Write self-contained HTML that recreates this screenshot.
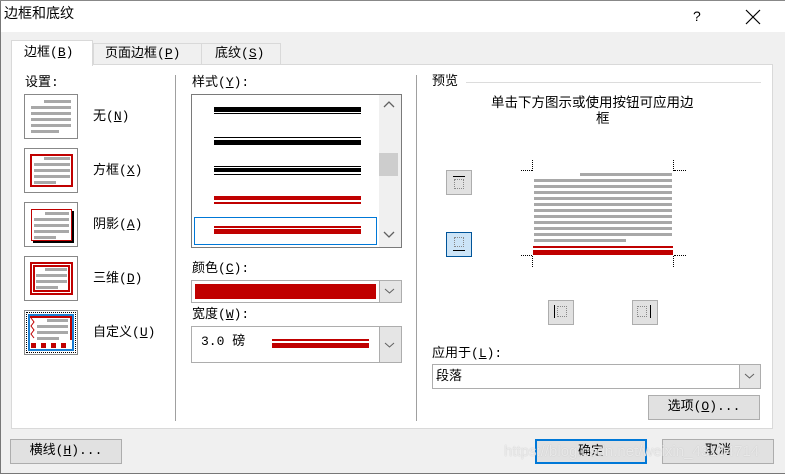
<!DOCTYPE html>
<html><head><meta charset="utf-8"><style>
*{box-sizing:border-box;margin:0;padding:0}
body{width:785px;height:474px;overflow:hidden;background:#f0f0f0;font-family:"Liberation Mono","Noto Sans CJK SC",monospace;font-size:13px;color:#000;position:relative}
.a{position:absolute}
.t{position:absolute;white-space:nowrap;line-height:16px}
.btn{position:absolute;background:#e1e1e1;border:1px solid #adadad;text-align:center;line-height:22px}
.g{position:absolute;background:#a8a8a8;height:3px}
.sb{position:absolute;border:1px solid #848484;background:#fff}
.ib{position:absolute;width:26px;height:25px;background:#e1e1e1;border:1px solid #adadad}
</style></head><body>
<div class="a" style="left:0;top:0;width:785px;height:32px;background:#fff"></div>
<div class="a" style="left:0;top:0;width:1px;height:474px;background:#777"></div>
<div class="a" style="left:0;top:0;width:785px;height:1px;background:#888"></div>
<div class="a" style="left:0;top:473px;width:785px;height:1px;background:#777"></div>
<div class="t" style="left:4px;top:7px;font-size:14px">边框和底纹</div>
<div class="t" style="left:693px;top:8px;font-size:14px;font-family:'Liberation Sans',sans-serif">?</div>
<svg class="a" style="left:745px;top:9px" width="16" height="16"><path d="M1 1L15 15M15 1L1 15" stroke="#000" stroke-width="1.2"/></svg>

<div class="a" style="left:93px;top:43px;width:109px;height:22px;background:#f0f0f0;border:1px solid #d9d9d9"></div>
<div class="a" style="left:201px;top:43px;width:80px;height:22px;background:#f0f0f0;border:1px solid #d9d9d9"></div>
<div class="a" style="left:11px;top:64px;width:762px;height:365px;background:#fff;border:1px solid #d9d9d9"></div>
<div class="a" style="left:11px;top:40px;width:82px;height:26px;background:#fff;border:1px solid #d9d9d9;border-bottom:none"></div>
<div class="t" style="left:24px;top:45px">边框(<u>B</u>)</div>
<div class="t" style="left:105px;top:46px">页面边框(<u>P</u>)</div>
<div class="t" style="left:215px;top:46px">底纹(<u>S</u>)</div>

<div class="t" style="left:25px;top:75px">设置:</div>
<div class="a" style="left:175px;top:75px;width:1px;height:346px;background:#a0a0a0"></div>
<div class="sb" style="left:24px;top:94px;width:54px;height:45px;border-color:#888"></div>
<div class="g" style="left:44px;top:100px;width:27px"></div>
<div class="g" style="left:31px;top:106px;width:40px"></div><div class="g" style="left:31px;top:112px;width:40px"></div><div class="g" style="left:31px;top:118px;width:40px"></div><div class="g" style="left:31px;top:124px;width:40px"></div><div class="g" style="left:31px;top:130px;width:28px"></div>
<div class="t" style="left:93px;top:109px">无(<u>N</u>)</div>

<div class="sb" style="left:24px;top:148px;width:54px;height:45px;border-color:#888"></div>
<div class="a" style="left:30px;top:154px;width:43px;height:33px;border:2px solid #c00000"></div>
<div class="g" style="left:44px;top:157px;width:26px"></div><div class="g" style="left:34px;top:163px;width:36px"></div><div class="g" style="left:34px;top:169px;width:36px"></div><div class="g" style="left:34px;top:175px;width:36px"></div><div class="g" style="left:34px;top:181px;width:22px"></div>
<div class="t" style="left:93px;top:163px">方框(<u>X</u>)</div>

<div class="sb" style="left:24px;top:202px;width:54px;height:45px;border-color:#888"></div>
<div class="a" style="left:31px;top:209px;width:41px;height:32px;border:1px solid #c00000;box-shadow:2px 2px 0 #000"></div>
<div class="g" style="left:45px;top:212px;width:24px"></div><div class="g" style="left:34px;top:218px;width:35px"></div><div class="g" style="left:34px;top:224px;width:35px"></div><div class="g" style="left:34px;top:230px;width:35px"></div><div class="g" style="left:34px;top:236px;width:22px"></div>
<div class="t" style="left:93px;top:217px">阴影(<u>A</u>)</div>

<div class="sb" style="left:24px;top:256px;width:54px;height:45px;border-color:#888"></div>
<div class="a" style="left:30px;top:262px;width:43px;height:33px;border:2px solid #c00000"></div>
<div class="a" style="left:33px;top:265px;width:37px;height:27px;border:2px solid #c00000"></div>
<div class="g" style="left:45px;top:268px;width:22px"></div><div class="g" style="left:36px;top:274px;width:31px"></div><div class="g" style="left:36px;top:280px;width:31px"></div><div class="g" style="left:36px;top:286px;width:22px"></div>
<div class="t" style="left:93px;top:271px">三维(<u>D</u>)</div>

<div class="sb" style="left:24px;top:310px;width:54px;height:45px;border-color:#888"></div>
<div class="a" style="left:26px;top:312px;width:50px;height:41px;border:1px dotted #000"></div>
<div class="a" style="left:28px;top:314px;width:46px;height:37px;border:2px solid #1a7fd4"></div>
<div class="a" style="left:30px;top:316px;width:41px;height:2px;background:#c00000"></div>
<div class="a" style="left:70px;top:316px;width:2px;height:24px;background:#c00000"></div>
<svg class="a" style="left:30px;top:318px" width="6" height="22"><path d="M1 0L4 4L1 8L4 12L1 16L4 20" stroke="#c00000" fill="none"/></svg>
<div class="g" style="left:47px;top:319px;width:21px"></div><div class="g" style="left:37px;top:325px;width:31px"></div><div class="g" style="left:37px;top:331px;width:31px"></div><div class="g" style="left:37px;top:337px;width:22px"></div>
<div class="a" style="left:31px;top:343px;width:5px;height:5px;background:#c00000"></div><div class="a" style="left:41px;top:343px;width:5px;height:5px;background:#c00000"></div><div class="a" style="left:51px;top:343px;width:5px;height:5px;background:#c00000"></div><div class="a" style="left:61px;top:343px;width:5px;height:5px;background:#c00000"></div>
<div class="t" style="left:93px;top:325px">自定义(<u>U</u>)</div>

<div class="t" style="left:192px;top:75px">样式(<u>Y</u>):</div>
<div class="sb" style="left:191px;top:94px;width:211px;height:154px;border-color:#7a7a7a"></div>
<div class="a" style="left:379px;top:95px;width:22px;height:152px;background:#f0f0f0"></div>
<div class="a" style="left:379px;top:153px;width:19px;height:23px;background:#cdcdcd"></div>
<svg class="a" style="left:383px;top:100px" width="12" height="10"><path d="M1 7L6 2L11 7" stroke="#606060" fill="none" stroke-width="1.3"/></svg>
<svg class="a" style="left:383px;top:230px" width="12" height="10"><path d="M1 2L6 7L11 2" stroke="#606060" fill="none" stroke-width="1.3"/></svg>
<div class="a" style="left:214px;top:107px;width:147px;height:5px;background:#000"></div><div class="a" style="left:214px;top:113px;width:147px;height:1px;background:#000"></div>
<div class="a" style="left:214px;top:137px;width:147px;height:1px;background:#000"></div><div class="a" style="left:214px;top:140px;width:147px;height:5px;background:#000"></div>
<div class="a" style="left:214px;top:166px;width:147px;height:1px;background:#000"></div><div class="a" style="left:214px;top:168px;width:147px;height:4px;background:#000"></div><div class="a" style="left:214px;top:174px;width:147px;height:1px;background:#000"></div>
<div class="a" style="left:214px;top:196px;width:147px;height:4px;background:#c00000"></div><div class="a" style="left:214px;top:202px;width:147px;height:2px;background:#c00000"></div>
<div class="a" style="left:194px;top:217px;width:183px;height:28px;border:1px solid #0078d7"></div>
<div class="a" style="left:214px;top:226px;width:147px;height:2px;background:#c00000"></div><div class="a" style="left:214px;top:229px;width:147px;height:5px;background:#c00000"></div>

<div class="t" style="left:192px;top:261px">颜色(<u>C</u>):</div>
<div class="a" style="left:191px;top:280px;width:211px;height:23px;background:#fff;border:1px solid #adadad"></div>
<div class="a" style="left:195px;top:284px;width:181px;height:15px;background:#c00000"></div>
<div class="a" style="left:379px;top:281px;width:22px;height:21px;background:#e5e5e5;border-left:1px solid #adadad"></div>
<svg class="a" style="left:384px;top:287px" width="11" height="8"><path d="M1 2L5.5 6L10 2" stroke="#606060" fill="none"/></svg>
<div class="t" style="left:192px;top:307px">宽度(<u>W</u>):</div>
<div class="a" style="left:191px;top:326px;width:211px;height:37px;background:#fff;border:1px solid #adadad"></div>
<div class="t" style="left:201px;top:334px">3.0 磅</div>
<div class="a" style="left:272px;top:339px;width:97px;height:2px;background:#c00000"></div><div class="a" style="left:272px;top:343px;width:97px;height:5px;background:#c00000"></div>
<div class="a" style="left:379px;top:327px;width:22px;height:35px;background:#e5e5e5;border-left:1px solid #adadad"></div>
<svg class="a" style="left:384px;top:341px" width="11" height="8"><path d="M1 2L5.5 6L10 2" stroke="#606060" fill="none"/></svg>

<div class="a" style="left:416px;top:75px;width:1px;height:346px;background:#a0a0a0"></div>
<div class="t" style="left:432px;top:74px">预览</div>
<div class="a" style="left:466px;top:82px;width:295px;height:1px;background:#dcdcdc"></div>
<div class="t" style="left:491px;top:97px;font-size:13.5px">单击下方图示或使用按钮可应用边</div>
<div class="t" style="left:596px;top:113px;font-size:13.5px">框</div>

<div class="ib" style="left:446px;top:170px"></div>
<div class="a" style="left:453px;top:176px;width:12px;height:1px;background:#000"></div>
<div class="a" style="left:454px;top:179px;width:10px;height:10px;border:1px dotted #888"></div>
<div class="ib" style="left:446px;top:232px;background:#cce4f7;border-color:#005499"></div>
<div class="a" style="left:454px;top:237px;width:10px;height:10px;border:1px dotted #888"></div>
<div class="a" style="left:453px;top:250px;width:12px;height:1px;background:#000"></div>
<div class="ib" style="left:548px;top:300px"></div>
<div class="a" style="left:554px;top:305px;width:1px;height:13px;background:#000"></div>
<div class="a" style="left:557px;top:306px;width:10px;height:11px;border:1px dotted #888"></div>
<div class="ib" style="left:632px;top:300px"></div>
<div class="a" style="left:637px;top:306px;width:10px;height:11px;border:1px dotted #888"></div>
<div class="a" style="left:650px;top:305px;width:1px;height:13px;background:#000"></div>

<div class="a" style="left:532px;top:160px;width:0;height:11px;border-left:1px dotted #000"></div>
<div class="a" style="left:521px;top:170px;width:11px;height:0;border-top:1px dotted #000"></div>
<div class="a" style="left:673px;top:160px;width:0;height:11px;border-left:1px dotted #000"></div>
<div class="a" style="left:674px;top:170px;width:12px;height:0;border-top:1px dotted #000"></div>
<div class="a" style="left:532px;top:256px;width:0;height:11px;border-left:1px dotted #000"></div>
<div class="a" style="left:521px;top:255px;width:11px;height:0;border-top:1px dotted #000"></div>
<div class="a" style="left:673px;top:256px;width:0;height:11px;border-left:1px dotted #000"></div>
<div class="a" style="left:674px;top:255px;width:12px;height:0;border-top:1px dotted #000"></div>
<div class="g" style="left:580px;top:173px;width:92px"></div>
<div class="g" style="left:534px;top:179px;width:138px"></div><div class="g" style="left:534px;top:185px;width:138px"></div><div class="g" style="left:534px;top:191px;width:138px"></div><div class="g" style="left:534px;top:197px;width:138px"></div><div class="g" style="left:534px;top:203px;width:138px"></div><div class="g" style="left:534px;top:209px;width:138px"></div><div class="g" style="left:534px;top:215px;width:138px"></div><div class="g" style="left:534px;top:221px;width:138px"></div><div class="g" style="left:534px;top:227px;width:138px"></div><div class="g" style="left:534px;top:233px;width:138px"></div><div class="g" style="left:534px;top:239px;width:92px"></div>
<div class="a" style="left:533px;top:246px;width:140px;height:2px;background:#c00000"></div>
<div class="a" style="left:533px;top:250px;width:140px;height:5px;background:#c00000"></div>

<div class="t" style="left:432px;top:346px">应用于(<u>L</u>):</div>
<div class="a" style="left:432px;top:364px;width:329px;height:25px;background:#fff;border:1px solid #adadad"></div>
<div class="t" style="left:436px;top:369px">段落</div>
<div class="a" style="left:739px;top:365px;width:21px;height:23px;background:#e5e5e5;border-left:1px solid #adadad"></div>
<svg class="a" style="left:744px;top:372px" width="11" height="8"><path d="M1 2L5.5 6L10 2" stroke="#606060" fill="none"/></svg>
<div class="btn" style="left:648px;top:395px;width:112px;height:25px">选项(<u>O</u>)...</div>

<div class="btn" style="left:10px;top:439px;width:112px;height:25px">横线(<u>H</u>)...</div>
<div class="btn" style="left:535px;top:439px;width:112px;height:25px;border:2px solid #0078d7;line-height:21px">确定</div>
<div class="btn" style="left:662px;top:439px;width:112px;height:25px">取消</div>
<div class="t" style="left:504px;top:444px;color:rgba(255,255,255,0.6);font-family:'Liberation Sans',sans-serif;font-size:15px;text-shadow:0 0 1px #bbb">https://blog.csdn.net/weixin_43104714</div>
</body></html>
